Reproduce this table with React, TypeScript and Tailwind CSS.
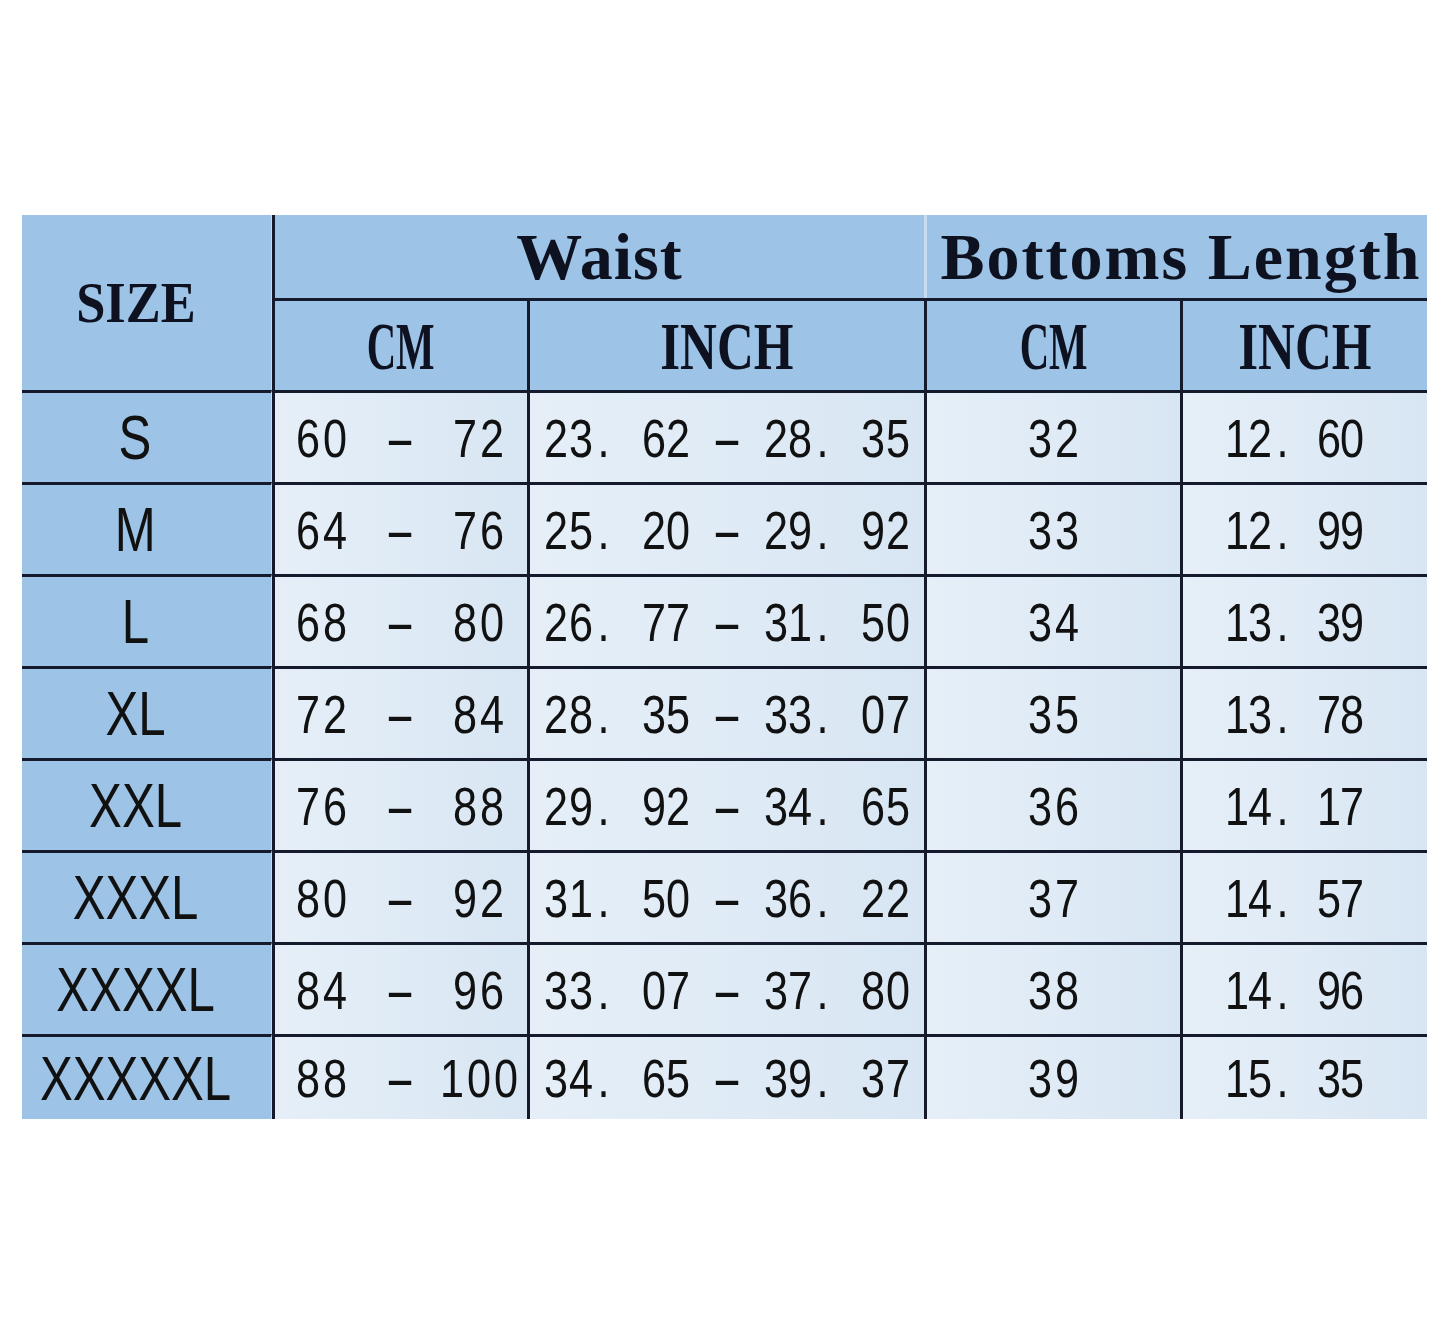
import clsx from "clsx";

const rows = [
  { size: "S", cm: ["60", "72"], inch: "23. 62 - 28. 35", len: "32", lenIn: "12. 60" },
  { size: "M", cm: ["64", "76"], inch: "25. 20 - 29. 92", len: "33", lenIn: "12. 99" },
  { size: "L", cm: ["68", "80"], inch: "26. 77 - 31. 50", len: "34", lenIn: "13. 39" },
  { size: "XL", cm: ["72", "84"], inch: "28. 35 - 33. 07", len: "35", lenIn: "13. 78" },
  { size: "XXL", cm: ["76", "88"], inch: "29. 92 - 34. 65", len: "36", lenIn: "14. 17" },
  { size: "XXXL", cm: ["80", "92"], inch: "31. 50 - 36. 22", len: "37", lenIn: "14. 57" },
  { size: "XXXXL", cm: ["84", "96"], inch: "33. 07 - 37. 80", len: "38", lenIn: "14. 96" },
  { size: "XXXXXL", cm: ["88", "100"], inch: "34. 65 - 39. 37", len: "39", lenIn: "15. 35" },
];

const sans = "font-['Liberation_Sans',Arial,sans-serif]";

// each character gets a fixed slot, like the half-width CJK font in the original
function Mono({ text, slot }: { text: string; slot: string }) {
  return (
    <span className={clsx("inline-flex text-[54px] leading-none text-[#111]", sans)}>
      {text.split("").map((ch, i) => (
        <span
          key={i}
          className={clsx("flex", slot, ch === "." ? "justify-start pl-[3px]" : "justify-center")}
        >
          {ch === " " ? (
            "\u00a0"
          ) : ch === "-" ? (
            <span className="inline-block scale-x-[1.7]">-</span>
          ) : (
            <span className="inline-block scale-x-[0.8]">{ch}</span>
          )}
        </span>
      ))}
    </span>
  );
}

function Head({ children, className }: { children: string; className?: string }) {
  return (
    <span
      className={clsx(
        "inline-block whitespace-pre font-['Liberation_Serif','Times_New_Roman',serif] font-bold leading-none text-[#0e1220]",
        className
      )}
    >
      {children}
    </span>
  );
}

const line = "border-[#151b2c]";
const headBg = "bg-[#9dc3e6]";
const dataBg = "bg-linear-to-r from-[#e6eff8] to-[#d8e6f3]";

export default function App() {
  return (
    <div className="w-[1445px] h-[1335px] bg-white pt-[215px] pl-[22px]">
      <div className="grid w-[1405px] grid-cols-[250px_255px_397px_256px_247px] grid-rows-[83px_92px_repeat(7,92px)_85px]">
        {/* header */}
        <div className={clsx("row-span-2 flex items-center justify-center pr-[22px] border-r border-r-[#c9dcef]", headBg)}>
          <Head className="text-[57px] scale-x-[0.92]">SIZE</Head>
        </div>
        <div className={clsx("col-span-2 flex items-center justify-center border-l-[3px]", line, headBg)}>
          <Head className="text-[66px] tracking-[1px]">Waist</Head>
        </div>
        <div className={clsx("col-span-2 flex items-center justify-center pl-[8px] border-l-[3px] border-l-[#c8dcf0]", headBg)}>
          <Head className="text-[66px] tracking-[2px]">Bottoms Length</Head>
        </div>
        {["CM", "INCH", "CM", "INCH"].map((t, i) => (
          <div key={i} className={clsx("flex items-center justify-center border-t-[3px] border-l-[3px]", line, headBg)}>
            <Head className={clsx("text-[68px]", t === "CM" ? "scale-x-[0.6]" : "scale-x-[0.75]")}>{t}</Head>
          </div>
        ))}

        {/* body */}
        {rows.map((r) => (
          <div key={r.size} className="contents">
            <div className={clsx("flex items-center justify-center pr-[22px] border-t-[3px] border-r border-r-[#c9dcef]", line, headBg)}>
              <span className={clsx("inline-block scale-x-[0.78] text-[63px] leading-none text-[#111]", sans)}>{r.size}</span>
            </div>
            <div className={clsx("grid grid-cols-[94px_62px_96px] items-center border-t-[3px] border-l-[3px]", line, dataBg)}>
              <div className="flex justify-center">
                <Mono text={r.cm[0]} slot="w-[27px]" />
              </div>
              <div className="flex justify-center">
                <Mono text="-" slot="w-[24px]" />
              </div>
              <div className="flex justify-center">
                <Mono text={r.cm[1]} slot="w-[27px]" />
              </div>
            </div>
            <div className={clsx("flex items-center justify-center border-t-[3px] border-l-[3px]", line, dataBg)}>
              <Mono text={r.inch} slot="w-[24.4px]" />
            </div>
            <div className={clsx("flex items-center justify-center border-t-[3px] border-l-[3px]", line, dataBg)}>
              <Mono text={r.len} slot="w-[27px]" />
            </div>
            <div className={clsx("flex items-center justify-center pr-[20px] border-t-[3px] border-l-[3px]", line, dataBg)}>
              <Mono text={r.lenIn} slot="w-[23px]" />
            </div>
          </div>
        ))}
      </div>
    </div>
  );
}
